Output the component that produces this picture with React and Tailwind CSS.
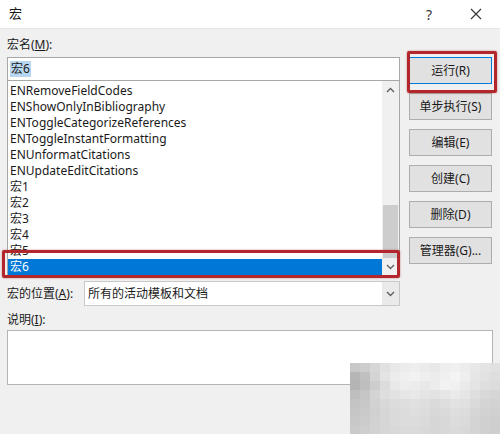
import React from "react";

const items = [
  "ENRemoveFieldCodes",
  "ENShowOnlyInBibliography",
  "ENToggleCategorizeReferences",
  "ENToggleInstantFormatting",
  "ENUnformatCitations",
  "ENUpdateEditCitations",
  "宏1",
  "宏2",
  "宏3",
  "宏4",
  "宏5",
];

const buttons = ["单步执行(S)", "编辑(E)", "创建(C)", "删除(D)", "管理器(G)..."];

const mosaic = [
  [200, 205, 215, 225, 232, 236, 238, 235, 232, 238, 240, 236, 232, 228, 225],
  [182, 192, 212, 228, 236, 240, 242, 238, 236, 240, 244, 238, 230, 226, 222],
  [180, 190, 205, 220, 232, 238, 236, 232, 236, 242, 240, 234, 228, 222, 220],
  [190, 198, 212, 222, 226, 230, 232, 228, 226, 230, 234, 230, 222, 216, 214],
  [196, 200, 210, 216, 220, 222, 224, 222, 218, 222, 226, 224, 218, 212, 210],
  [198, 202, 208, 214, 218, 220, 222, 220, 216, 218, 222, 220, 214, 210, 208],
  [200, 204, 210, 214, 218, 220, 220, 218, 214, 216, 220, 218, 212, 208, 206],
  [202, 206, 210, 214, 216, 218, 218, 216, 214, 216, 218, 216, 212, 208, 206],
];

function Chevron({ up }) {
  return (
    <svg width="9" height="6" viewBox="0 0 9 6">
      <path
        d={up ? "M1 5 L4.5 1.5 L8 5" : "M1 1 L4.5 4.5 L8 1"}
        fill="none"
        stroke="#606060"
        strokeWidth="1.4"
      />
    </svg>
  );
}

export default function App() {
  return (
    <div
      className="relative w-[500px] h-[434px] overflow-hidden bg-[#f0f0f0] text-[12px] text-[#1a1a1a]"
      style={{ fontFamily: '"Noto Sans", "Noto Sans CJK SC", sans-serif' }}
    >
      {/* title bar */}
      <div className="flex h-[29px] items-center bg-white pl-[9px] pr-[18px] border-b border-[#e6e6e6]">
        <span className="text-[13px]">宏</span>
        <span className="ml-auto text-[14px] text-[#333]">?</span>
        <svg className="ml-[38px]" width="12" height="12" viewBox="0 0 12 12">
          <path d="M1 1 L11 11 M11 1 L1 11" stroke="#333" strokeWidth="1.1" />
        </svg>
      </div>

      <div className="flex pl-[7px] pt-[8px]">
        {/* left column */}
        <div className="flex w-[393px] flex-col">
          <div className="h-[20px] leading-[16px]">
            宏名(<span className="underline">M</span>):
          </div>
          <div className="flex h-[24px] items-center border border-[#a8a8a8] bg-white pl-[2px]">
            <span className="bg-[#b9d6f0] px-[1px] leading-[16px]">宏6</span>
          </div>
          <div className="flex h-[195px] border border-t-0 border-[#a8a8a8] bg-white">
            <div className="flex flex-1 flex-col pt-[2px]">
              {items.map((t) => (
                <div key={t} className="h-[16px] pl-[2px] leading-[16px]">
                  {t}
                </div>
              ))}
              <div className="h-[16px] bg-[#0078d7] pl-[2px] leading-[16px] text-white">宏6</div>
            </div>
            <div className="flex w-[17px] flex-col bg-[#f0f0f0]">
              <div className="flex h-[17px] items-center justify-center">
                <Chevron up />
              </div>
              <div className="flex-1" />
              <div className="mx-[1px] h-[53px] bg-[#cdcdcd]" />
              <div className="flex h-[17px] items-center justify-center">
                <Chevron />
              </div>
            </div>
          </div>
        </div>

        {/* buttons */}
        <div className="ml-[9px] flex w-[83px] flex-col gap-[9px] pt-[20px]">
          <div className="flex h-[27px] items-center justify-center border border-[#0078d7] bg-[#e1e1e1]">
            运行(R)
          </div>
          {buttons.map((b) => (
            <div
              key={b}
              className="flex h-[27px] items-center justify-center border border-[#adadad] bg-[#e1e1e1]"
            >
              {b}
            </div>
          ))}
        </div>
      </div>

      {/* location row */}
      <div className="mt-[5px] flex items-center pl-[7px]">
        <span className="w-[77px] leading-[16px]">
          宏的位置(<span className="underline">A</span>):
        </span>
        <div className="flex h-[25px] w-[316px] items-center border border-[#c8c8c8] bg-white">
          <span className="flex-1 pl-[3px]">所有的活动模板和文档</span>
          <div className="flex h-full w-[17px] items-center justify-center bg-[#eaeaea]">
            <Chevron />
          </div>
        </div>
      </div>

      <div className="mt-[6px] pl-[7px] leading-[16px]">
        说明(<span className="underline">I</span>):
      </div>
      <div className="ml-[7px] mt-[2px] h-[55px] w-[486px] border border-[#b4b4b4] bg-white" />

      {/* red highlight boxes */}
      <div className="absolute left-[407px] top-[51px] h-[42px] w-[90px] rounded-[2px] border-[3px] border-[#b3262c] shadow-[0_0_2px_rgba(150,0,0,0.5)]" />
      <div className="absolute left-[2px] top-[250px] h-[28px] w-[398px] rounded-[2px] border-[3px] border-[#b3262c] shadow-[0_0_2px_rgba(150,0,0,0.5)]" />

      {/* watermark mosaic */}
      <div className="absolute left-[350px] top-[363px] grid grid-cols-[repeat(15,10px)]">
        {mosaic.flat().map((g, i) => (
          <div key={i} className="h-[9px] w-[10px]" style={{ backgroundColor: `rgb(${g},${g},${g})` }} />
        ))}
      </div>
    </div>
  );
}
